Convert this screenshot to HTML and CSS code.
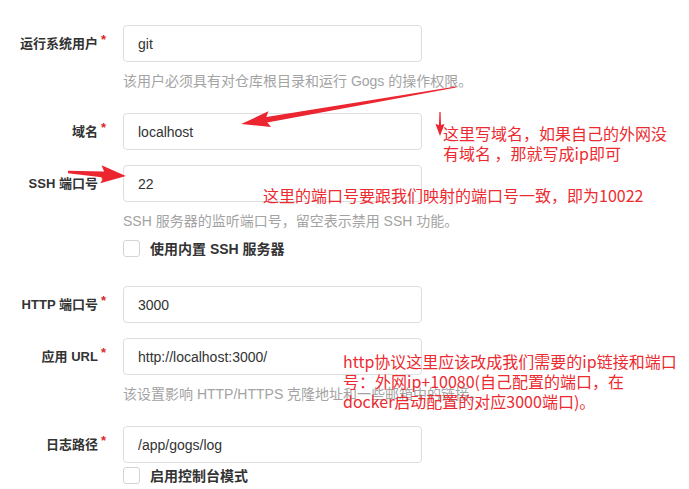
FILE: index.html
```html
<!DOCTYPE html>
<html lang="zh-CN">
<head>
  <meta charset="UTF-8">
  <title>Gogs 安装 - 应用基本设置</title>
  <link rel="stylesheet" href="styles.css">
</head>
<body>
  <div class="page">
    <form class="form">
      <div class="field">
        <label class="field-label">运行系统用户</label>
        <div class="field-body">
          <input class="text-input" type="text" value="git">
          <p class="help">该用户必须具有对仓库根目录和运行 Gogs 的操作权限。</p>
        </div>
      </div>

      <div class="field">
        <label class="field-label">域名</label>
        <div class="field-body">
          <input class="text-input" type="text" value="localhost">
        </div>
      </div>

      <div class="field">
        <label class="field-label">SSH 端口号</label>
        <div class="field-body">
          <input class="text-input" type="text" value="22">
          <p class="help">SSH 服务器的监听端口号，留空表示禁用 SSH 功能。</p>
          <div class="checkbox checkbox-ssh">
            <span class="box"></span>
            <span class="checkbox-text">使用内置 SSH 服务器</span>
          </div>
        </div>
      </div>

      <div class="field">
        <label class="field-label">HTTP 端口号</label>
        <div class="field-body">
          <input class="text-input" type="text" value="3000">
        </div>
      </div>

      <div class="field">
        <label class="field-label">应用 URL</label>
        <div class="field-body">
          <input class="text-input" type="text" value="http://localhost:3000/">
          <p class="help">该设置影响 HTTP/HTTPS 克隆地址和一些邮箱中的链接。</p>
        </div>
      </div>

      <div class="field">
        <label class="field-label">日志路径</label>
        <div class="field-body">
          <input class="text-input" type="text" value="/app/gogs/log">
          <div class="checkbox checkbox-console">
            <span class="box"></span>
            <span class="checkbox-text">启用控制台模式</span>
          </div>
        </div>
      </div>
    </form>

    <!-- annotations drawn on top of the screenshot -->
    <div class="note note-domain">这里写域名，如果自己的外网没<br>有域名 ，那就写成ip即可</div>
    <div class="note note-ssh">这里的端口号要跟我们映射的端口号一致，即为10022</div>
    <div class="note note-url">http协议这里应该改成我们需要的ip链接和端口<br>号：外网ip+10080(自己配置的端口，在<br>docker启动配置的对应3000端口)。</div>

    <svg class="arrows" width="689" height="489" viewBox="0 0 689 489">
      <g transform="translate(456 87) rotate(170.2)">
        <polygon points="0,-0.6 192,-2.8 189,-8 218,0 189,8 192,2.8 0,0.6"/>
      </g>
      <g transform="translate(440 112) rotate(90)">
        <polygon points="0,-0.6 13,-1 12,-4.5 24,0 12,4.5 13,1 0,0.6"/>
      </g>
      <g transform="translate(68 172) rotate(3.9)">
        <polygon points="0,-1.2 36,-3 33,-9 58,0 33,9 36,3 0,1.2"/>
      </g>
    </svg>
  </div>
</body>
</html>
```

FILE: styles.css
```css
body {
  margin: 0;
  padding: 0;
  background: #fff;
  font-family: 'Liberation Sans', Arial, 'Noto Sans CJK SC', sans-serif;
  color: #333;
}

.page {
  position: relative;
  width: 689px;
  height: 489px;
  overflow: hidden;
}

.form {
  padding-top: 25px;
}

.field {
  display: flex;
  align-items: flex-start;
  margin-bottom: 15px;
}

.field-label {
  width: 123px;
  box-sizing: border-box;
  padding-right: 17px;
  text-align: right;
  font-size: 13px;
  font-weight: bold;
  line-height: 37px;
  color: #333;
}

.field-label::after {
  content: '*';
  color: #db2828;
  margin-left: 3px;
  position: relative;
  top: -4px;
}

.field-body {
  width: 299px;
}

.text-input {
  display: block;
  width: 100%;
  height: 37px;
  box-sizing: border-box;
  margin: 0;
  padding: 0 14px;
  border: 1px solid #dedede;
  border-radius: 4px;
  background: #fff;
  font-family: 'Liberation Sans', Arial, sans-serif;
  font-size: 14px;
  color: #333;
  outline: none;
}

.help {
  margin: 9px 0 7px;
  font-size: 14px;
  line-height: 20px;
  color: #a3a3a3;
  white-space: nowrap;
}

.checkbox {
  display: flex;
  align-items: center;
  gap: 10px;
  height: 20px;
}

.checkbox-ssh {
  margin-bottom: 13px;
}

.checkbox-console {
  margin-top: 2px;
}

.checkbox .box {
  width: 17px;
  height: 17px;
  box-sizing: border-box;
  border: 1px solid #d4d4d5;
  border-radius: 3px;
  background: #fff;
}

.checkbox-text {
  font-size: 14px;
  font-weight: bold;
  color: #333;
  white-space: nowrap;
}

.note {
  position: absolute;
  font-family: 'Noto Sans CJK SC', sans-serif;
  font-size: 16px;
  line-height: 20px;
  color: #ec2b31;
  white-space: nowrap;
}

.note-domain {
  left: 443px;
  top: 123px;
}

.note-ssh {
  left: 263px;
  top: 185px;
}

.note-url {
  left: 343px;
  top: 351px;
}

.arrows {
  position: absolute;
  left: 0;
  top: 0;
  pointer-events: none;
}

.arrows polygon {
  fill: #ec2630;
}
```
